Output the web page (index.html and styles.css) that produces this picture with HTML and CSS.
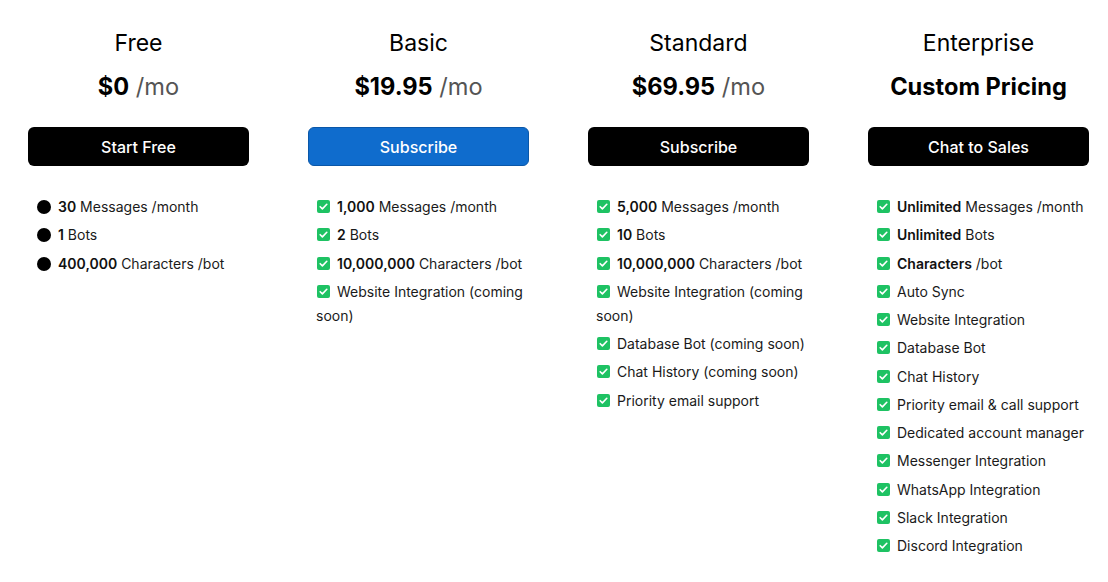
FILE: index.html
```html
<!DOCTYPE html>
<html lang="en">
<head>
<meta charset="utf-8">
<title>Pricing</title>
<link rel="stylesheet" href="styles.css">
</head>
<body>
<main class="plans">
  <section class="plan">
    <h2 class="plan-name">Free</h2>
    <p class="price"><b>$0</b> <span class="per">/mo</span></p>
    <a class="btn">Start Free</a>
    <ul class="features">
      <li><span class="dot"></span><b>30</b> Messages /month</li>
      <li><span class="dot"></span><b>1</b> Bots</li>
      <li><span class="dot"></span><b>400,000</b> Characters /bot</li>
    </ul>
  </section>
  <section class="plan">
    <h2 class="plan-name">Basic</h2>
    <p class="price"><b>$19.95</b> <span class="per">/mo</span></p>
    <a class="btn btn-blue">Subscribe</a>
    <ul class="features">
      <li><span class="chk"><svg viewBox="0 0 13 13"><rect width="13" height="13" rx="2"/><path d="M3.2 6.7l2.2 2.2 4.4-4.6"/></svg></span><b>1,000</b> Messages /month</li>
      <li><span class="chk"><svg viewBox="0 0 13 13"><rect width="13" height="13" rx="2"/><path d="M3.2 6.7l2.2 2.2 4.4-4.6"/></svg></span><b>2</b> Bots</li>
      <li><span class="chk"><svg viewBox="0 0 13 13"><rect width="13" height="13" rx="2"/><path d="M3.2 6.7l2.2 2.2 4.4-4.6"/></svg></span><b>10,000,000</b> Characters /bot</li>
      <li><span class="chk"><svg viewBox="0 0 13 13"><rect width="13" height="13" rx="2"/><path d="M3.2 6.7l2.2 2.2 4.4-4.6"/></svg></span>Website Integration (coming soon)</li>
    </ul>
  </section>
  <section class="plan">
    <h2 class="plan-name">Standard</h2>
    <p class="price"><b>$69.95</b> <span class="per">/mo</span></p>
    <a class="btn">Subscribe</a>
    <ul class="features">
      <li><span class="chk"><svg viewBox="0 0 13 13"><rect width="13" height="13" rx="2"/><path d="M3.2 6.7l2.2 2.2 4.4-4.6"/></svg></span><b>5,000</b> Messages /month</li>
      <li><span class="chk"><svg viewBox="0 0 13 13"><rect width="13" height="13" rx="2"/><path d="M3.2 6.7l2.2 2.2 4.4-4.6"/></svg></span><b>10</b> Bots</li>
      <li><span class="chk"><svg viewBox="0 0 13 13"><rect width="13" height="13" rx="2"/><path d="M3.2 6.7l2.2 2.2 4.4-4.6"/></svg></span><b>10,000,000</b> Characters /bot</li>
      <li><span class="chk"><svg viewBox="0 0 13 13"><rect width="13" height="13" rx="2"/><path d="M3.2 6.7l2.2 2.2 4.4-4.6"/></svg></span>Website Integration (coming soon)</li>
      <li><span class="chk"><svg viewBox="0 0 13 13"><rect width="13" height="13" rx="2"/><path d="M3.2 6.7l2.2 2.2 4.4-4.6"/></svg></span>Database Bot (coming soon)</li>
      <li><span class="chk"><svg viewBox="0 0 13 13"><rect width="13" height="13" rx="2"/><path d="M3.2 6.7l2.2 2.2 4.4-4.6"/></svg></span>Chat History (coming soon)</li>
      <li><span class="chk"><svg viewBox="0 0 13 13"><rect width="13" height="13" rx="2"/><path d="M3.2 6.7l2.2 2.2 4.4-4.6"/></svg></span>Priority email support</li>
    </ul>
  </section>
  <section class="plan">
    <h2 class="plan-name">Enterprise</h2>
    <p class="price"><b>Custom Pricing</b></p>
    <a class="btn">Chat to Sales</a>
    <ul class="features">
      <li><span class="chk"><svg viewBox="0 0 13 13"><rect width="13" height="13" rx="2"/><path d="M3.2 6.7l2.2 2.2 4.4-4.6"/></svg></span><b>Unlimited</b> Messages /month</li>
      <li><span class="chk"><svg viewBox="0 0 13 13"><rect width="13" height="13" rx="2"/><path d="M3.2 6.7l2.2 2.2 4.4-4.6"/></svg></span><b>Unlimited</b> Bots</li>
      <li><span class="chk"><svg viewBox="0 0 13 13"><rect width="13" height="13" rx="2"/><path d="M3.2 6.7l2.2 2.2 4.4-4.6"/></svg></span><b>Characters</b> /bot</li>
      <li><span class="chk"><svg viewBox="0 0 13 13"><rect width="13" height="13" rx="2"/><path d="M3.2 6.7l2.2 2.2 4.4-4.6"/></svg></span>Auto Sync</li>
      <li><span class="chk"><svg viewBox="0 0 13 13"><rect width="13" height="13" rx="2"/><path d="M3.2 6.7l2.2 2.2 4.4-4.6"/></svg></span>Website Integration</li>
      <li><span class="chk"><svg viewBox="0 0 13 13"><rect width="13" height="13" rx="2"/><path d="M3.2 6.7l2.2 2.2 4.4-4.6"/></svg></span>Database Bot</li>
      <li><span class="chk"><svg viewBox="0 0 13 13"><rect width="13" height="13" rx="2"/><path d="M3.2 6.7l2.2 2.2 4.4-4.6"/></svg></span>Chat History</li>
      <li><span class="chk"><svg viewBox="0 0 13 13"><rect width="13" height="13" rx="2"/><path d="M3.2 6.7l2.2 2.2 4.4-4.6"/></svg></span>Priority email &amp; call support</li>
      <li><span class="chk"><svg viewBox="0 0 13 13"><rect width="13" height="13" rx="2"/><path d="M3.2 6.7l2.2 2.2 4.4-4.6"/></svg></span>Dedicated account manager</li>
      <li><span class="chk"><svg viewBox="0 0 13 13"><rect width="13" height="13" rx="2"/><path d="M3.2 6.7l2.2 2.2 4.4-4.6"/></svg></span>Messenger Integration</li>
      <li><span class="chk"><svg viewBox="0 0 13 13"><rect width="13" height="13" rx="2"/><path d="M3.2 6.7l2.2 2.2 4.4-4.6"/></svg></span>WhatsApp Integration</li>
      <li><span class="chk"><svg viewBox="0 0 13 13"><rect width="13" height="13" rx="2"/><path d="M3.2 6.7l2.2 2.2 4.4-4.6"/></svg></span>Slack Integration</li>
      <li><span class="chk"><svg viewBox="0 0 13 13"><rect width="13" height="13" rx="2"/><path d="M3.2 6.7l2.2 2.2 4.4-4.6"/></svg></span>Discord Integration</li>
    </ul>
  </section>
</main>
</body>
</html>
```
FILE: styles.css
```css
* { box-sizing: border-box; }
html, body { margin: 0; background: #fff; }
body {
  font-family: Inter, "Noto Sans", "Liberation Sans", sans-serif;
  color: #111;
}
.plans {
  display: grid;
  grid-template-columns: repeat(4, 221px);
  column-gap: 59px;
  padding: 28px 0 0 28px;
  align-items: start;
}
.plan {
  display: flex;
  flex-direction: column;
}
.plan-name {
  margin: 0;
  font-size: 23px;
  font-weight: 400;
  line-height: 30px;
  text-align: center;
  color: #000;
}
.price {
  margin: 14px 0 0;
  font-size: 23.6px;
  line-height: 30px;
  text-align: center;
  color: #000;
}
.price b { font-weight: 700; }
.per { color: #555; font-weight: 400; }
.btn {
  margin-top: 25px;
  height: 39px;
  display: flex;
  align-items: center;
  justify-content: center;
  background: #000;
  color: #fff;
  border-radius: 6px;
  font-size: 16px;
  font-weight: 500;
}
.btn-blue {
  background: #0f6ccd;
  border: 1px solid #0a57a8;
}
.features {
  list-style: none;
  margin: 29px 0 0;
  padding: 0 0 0 8px;
  font-size: 14px;
  line-height: 24px;
  color: #1a1a1a;
}
.features li { margin-bottom: 4.25px; }
.features b { font-weight: 600; color: #111; }
.dot {
  display: inline-block;
  width: 14px;
  height: 14px;
  border-radius: 50%;
  background: #000;
  margin: 0 7px 0 1px;
  vertical-align: -2px;
}
.chk {
  display: inline-block;
  width: 13px;
  height: 13px;
  margin: 0 7px 0 1px;
  vertical-align: -1px;
}
.chk svg { display: block; width: 13px; height: 13px; }
.chk rect { fill: #1ec263; }
.chk path { fill: none; stroke: #fff; stroke-width: 1.6; stroke-linecap: round; stroke-linejoin: round; }
```
